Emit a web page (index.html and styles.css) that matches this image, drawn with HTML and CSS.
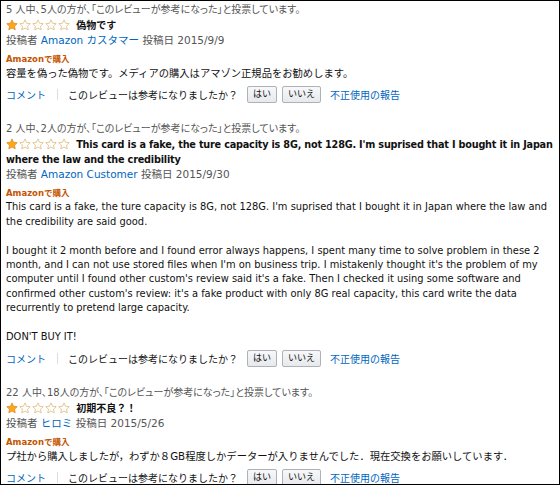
FILE: index.html
```html
<!DOCTYPE html>
<html lang="ja">
<head>
<meta charset="utf-8">
<link rel="stylesheet" href="styles.css">
</head>
<body>
<div class="frame">
  <svg width="0" height="0" class="defs">
    <defs>
      <symbol id="star" viewBox="0 0 20 20">
        <path d="M10 1.5l2.6 5.6 6.1.7-4.5 4.2 1.2 6-5.4-3-5.4 3 1.2-6-4.5-4.2 6.1-.7z"/>
      </symbol>
    </defs>
  </svg>

  <div class="review">
    <div class="votes">5 人中、5人の方が、「このレビューが参考になった」と投票しています。</div>
    <div class="title-row">
      <span class="stars">
        <svg class="star full"><use href="#star"/></svg><svg class="star"><use href="#star"/></svg><svg class="star"><use href="#star"/></svg><svg class="star"><use href="#star"/></svg><svg class="star"><use href="#star"/></svg>
      </span>
      <span class="title">偽物です</span>
    </div>
    <div class="byline">投稿者 <a class="link">Amazon カスタマー</a> 投稿日 2015/9/9</div>
    <div class="purchase">Amazonで購入</div>
    <div class="body">容量を偽った偽物です。メディアの購入はアマゾン正規品をお勧めします。</div>
    <div class="actions">
      <a class="link">コメント</a><span class="sep"></span>
      <span class="ask">このレビューは参考になりましたか？</span>
      <span class="btn">はい</span><span class="btn">いいえ</span>
      <a class="link report">不正使用の報告</a>
    </div>
  </div>

  <div class="review">
    <div class="votes">2 人中、2人の方が、「このレビューが参考になった」と投票しています。</div>
    <div class="title-row">
      <span class="stars">
        <svg class="star full"><use href="#star"/></svg><svg class="star"><use href="#star"/></svg><svg class="star"><use href="#star"/></svg><svg class="star"><use href="#star"/></svg><svg class="star"><use href="#star"/></svg>
      </span>
      <span class="title en">This card is a fake, the ture capacity is 8G, not 128G. I'm suprised that I bought it in Japan where the law and the credibility</span>
    </div>
    <div class="byline">投稿者 <a class="link">Amazon Customer</a> 投稿日 2015/9/30</div>
    <div class="purchase">Amazonで購入</div>
    <div class="body en">
      <p>This card is a fake, the ture capacity is 8G, not 128G. I'm suprised that I bought it in Japan where the law and the credibility are said good.</p>
      <p>I bought it 2 month before and I found error always happens, I spent many time to solve problem in these 2 month, and I can not use stored files when I'm on business trip. I mistakenly thought it's the problem of my computer until I found other custom's review said it's a fake. Then I checked it using some software and confirmed other custom's review: it's a fake product with only 8G real capacity, this card write the data recurrently to pretend large capacity.</p>
      <p>DON'T BUY IT!</p>
    </div>
    <div class="actions">
      <a class="link">コメント</a><span class="sep"></span>
      <span class="ask">このレビューは参考になりましたか？</span>
      <span class="btn">はい</span><span class="btn">いいえ</span>
      <a class="link report">不正使用の報告</a>
    </div>
  </div>

  <div class="review">
    <div class="votes">22 人中、18人の方が、「このレビューが参考になった」と投票しています。</div>
    <div class="title-row">
      <span class="stars">
        <svg class="star full"><use href="#star"/></svg><svg class="star"><use href="#star"/></svg><svg class="star"><use href="#star"/></svg><svg class="star"><use href="#star"/></svg><svg class="star"><use href="#star"/></svg>
      </span>
      <span class="title">初期不良？！</span>
    </div>
    <div class="byline">投稿者 <a class="link">ヒロミ</a> 投稿日 2015/5/26</div>
    <div class="purchase">Amazonで購入</div>
    <div class="body">プ社から購入しましたが，わずか８GB程度しかデーターが入りませんでした．現在交換をお願いしています．</div>
    <div class="actions">
      <a class="link">コメント</a><span class="sep"></span>
      <span class="ask">このレビューは参考になりましたか？</span>
      <span class="btn">はい</span><span class="btn">いいえ</span>
      <a class="link report">不正使用の報告</a>
    </div>
  </div>
</div>
</body>
</html>
```

FILE: styles.css
```css
html, body {
  margin: 0;
  padding: 0;
  background: #fff;
}

.frame {
  box-sizing: border-box;
  width: 560px;
  height: 485px;
  border: 1px solid #000;
  overflow: hidden;
  padding: 1px 4px 0 5px;
  font-family: "DejaVu Sans", "Noto Sans CJK JP", sans-serif;
  font-size: 10px;
  color: #111;
  background: #fff;
}

.defs {
  position: absolute;
  width: 0;
  height: 0;
}

.review {
  margin-bottom: 18px;
}

.votes {
  color: #555;
  line-height: 15px;
  font-size: 10px;
  font-feature-settings: "palt";
}

.title-row {
  line-height: 15px;
  margin-top: 1px;
}

.stars {
  display: inline-flex;
  gap: 1px;
  vertical-align: -2px;
  margin-right: 3px;
}

.star {
  width: 12px;
  height: 12px;
  fill: #fff;
  stroke: #d9b36c;
  stroke-width: 1.2;
}

.star.full {
  fill: #ffa41c;
  stroke: #d88a10;
}

.title {
  font-weight: bold;
  font-size: 10px;
}

.title.en {
  font-size: 9.7px;
  letter-spacing: -0.2px;
}

.byline {
  line-height: 15px;
  color: #555;
  font-size: 10.5px;
}

.link {
  color: #0066c0;
}

.purchase {
  margin-top: 4px;
  line-height: 14px;
  color: #c45500;
  font-weight: bold;
  font-size: 8.5px;
}

.body {
  line-height: 14.4px;
  font-size: 10.3px;
}

.body.en {
  font-size: 9.9px;
}

.body p {
  margin: 0 0 14.4px;
}

.body p:last-child {
  margin-bottom: 0;
}

.actions {
  display: flex;
  align-items: center;
  height: 18px;
  margin-top: 5px;
  font-size: 10px;
}

.sep {
  width: 1px;
  height: 11px;
  background: #ddd;
  margin: 0 10px 0 11px;
}

.ask {
  color: #111;
}

.btn {
  box-sizing: border-box;
  height: 17px;
  padding: 0 5px;
  margin-left: 9px;
  border: 1px solid #adb1b8;
  border-radius: 2px;
  background: linear-gradient(#f7f8fa, #e7e9ec);
  font-size: 9px;
  line-height: 15px;
  color: #111;
}

.btn + .btn {
  margin-left: 5px;
}

.report {
  margin-left: 9px;
}
```
